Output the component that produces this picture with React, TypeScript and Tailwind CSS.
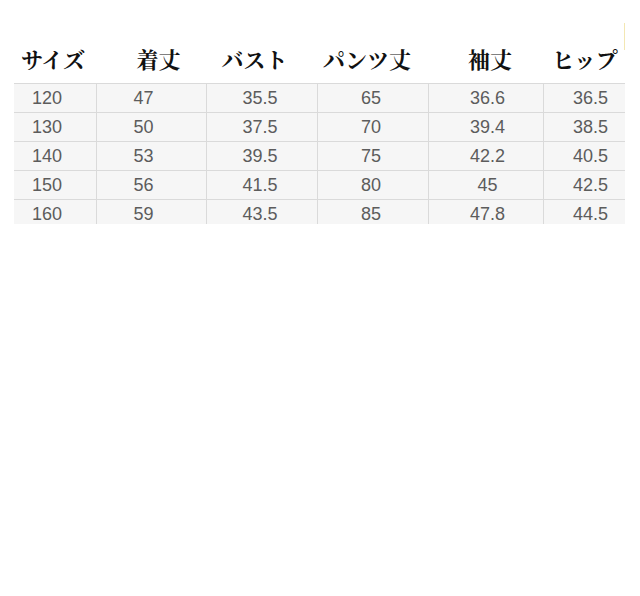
import React from "react";

const headers = [
  { t: "サイズ", cls: "pr-[4px]" },
  { t: "着丈", cls: "pl-[15px]" },
  { t: "バスト", cls: "pr-[14px]" },
  { t: "パンツ丈", cls: "pr-[11px]" },
  { t: "袖丈", cls: "pl-[9px]" },
  { t: "ヒップ", cls: "pl-[2px]" },
];

const widths = ["w-[82px]", "w-[110px]", "w-[111px]", "w-[111px]", "w-[115px]", "w-[82px]"];
const shifts = ["pr-[16px]", "pr-[16px]", "pr-[4px]", "pr-[4px]", "pl-[3px]", "pl-[12px]"];

const rows = [
  ["120", "47", "35.5", "65", "36.6", "36.5"],
  ["130", "50", "37.5", "70", "39.4", "38.5"],
  ["140", "53", "39.5", "75", "42.2", "40.5"],
  ["150", "56", "41.5", "80", "45", "42.5"],
  ["160", "59", "43.5", "85", "47.8", "44.5"],
];

export default function App() {
  return (
    <div className="relative w-[640px] h-[596px] bg-white overflow-hidden">
      <div className="absolute left-[624px] top-[23px] w-px h-[27px] bg-[#f3e7b3]" />
      <div className="ml-[14px] w-[611px]">
        <div
          className="flex h-[83px] items-start pt-[45px] text-[22px] leading-[28px] font-bold text-[#111]"
          style={{ fontFamily: '"Noto Serif CJK JP", "Noto Sans CJK JP", serif' }}
        >
          {headers.map((h, i) => (
            <div key={i} className={`${widths[i]} ${h.cls} text-center whitespace-nowrap`}>
              {h.t}
            </div>
          ))}
        </div>
        <div
          className="h-[141px] overflow-hidden"
          style={{ fontFamily: '"Liberation Sans", Arial, sans-serif' }}
        >
          {rows.map((r, ri) => (
            <div key={ri} className="flex h-[29px] border-t border-[#dadada] bg-[#f6f6f6]">
              {r.map((c, ci) => (
                <div
                  key={ci}
                  className={`${widths[ci]} ${shifts[ci]} ${ci > 0 ? "border-l border-[#dadada]" : ""} h-[28px] flex items-center justify-center text-[18px] text-[#5c5c5c]`}
                >
                  {c}
                </div>
              ))}
            </div>
          ))}
        </div>
      </div>
    </div>
  );
}
